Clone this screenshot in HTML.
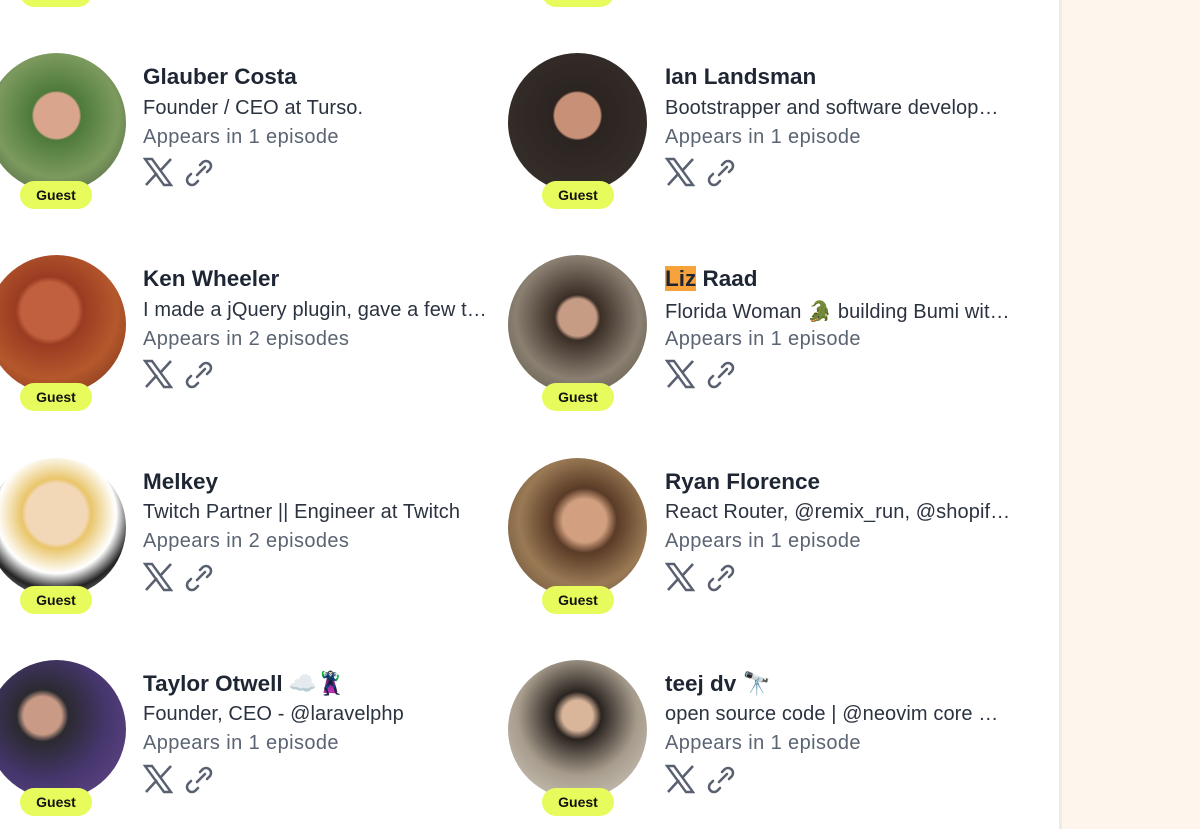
<!DOCTYPE html>
<html><head><meta charset="utf-8"><style>
body{margin:0;width:1200px;height:829px;overflow:hidden;background:#fff;font-family:"Liberation Sans","Noto Sans CJK SC",sans-serif;position:relative}
.panel{position:absolute;left:1059px;top:0;width:141px;height:829px;background:#fef6ec;border-left:3px solid #f1ebe3}
.av{position:absolute;width:139px;height:139px;border-radius:50%}
.badge{position:absolute;width:72px;height:28px;border-radius:14px;background:#e8fb5c;font-size:14px;font-weight:bold;color:#111;text-align:center;line-height:28px}
.t{position:absolute;white-space:nowrap}
.n{font-size:22.5px;font-weight:bold;color:#1e2533}
.d{font-size:20px;color:#2b3340;letter-spacing:0.1px}
.a{font-size:20px;color:#5b6473;letter-spacing:0.4px}
.ic{position:absolute}
.hl{background:#f7a23b}
</style></head><body>
<div class="panel"></div>
<div class="badge" style="left:20px;top:-21px"></div>
<div class="badge" style="left:542px;top:-21px"></div>

<div class="av" style="left:-13px;top:53px;background:radial-gradient(circle at 50% 45%,#d9a58d 0 22%,#4e7a3c 24%,#7c9a5e 60%,#40503a)"></div>
<div class="av" style="left:508px;top:53px;background:radial-gradient(circle at 50% 45%,#c89077 0 22%,#2b2421 24%,#3a322c)"></div>
<div class="av" style="left:-13px;top:255px;background:radial-gradient(circle at 45% 40%,#c0603e 0 25%,#9a3c22 30%,#b5582c 60%,#6d2b17)"></div>
<div class="av" style="left:508px;top:255px;background:radial-gradient(circle at 50% 45%,#c79c85 0 18%,#3a2e26 22%,#8b8072 60%,#4a4838)"></div>
<div class="av" style="left:-13px;top:458px;background:radial-gradient(circle at 50% 40%,#f2d8b6 0 28%,#e9c56a 32%,#fff 55%,#222 70%,#fff)"></div>
<div class="av" style="left:508px;top:458px;background:radial-gradient(circle at 55% 45%,#d2a080 0 20%,#5a3b26 30%,#9a7a55 60%,#5a4630)"></div>
<div class="av" style="left:-13px;top:660px;background:radial-gradient(circle at 40% 40%,#c99b86 0 16%,#2b2a30 22%,#46366e 55%,#6a4a8a)"></div>
<div class="av" style="left:508px;top:660px;background:radial-gradient(circle at 50% 40%,#d9b59a 0 14%,#2a2420 22%,#a79c8c 55%,#d8d3c9)"></div>

<div class="badge" style="left:20px;top:181px">Guest</div>
<div class="badge" style="left:542px;top:181px">Guest</div>
<div class="badge" style="left:20px;top:383px">Guest</div>
<div class="badge" style="left:542px;top:383px">Guest</div>
<div class="badge" style="left:20px;top:586px">Guest</div>
<div class="badge" style="left:542px;top:586px">Guest</div>
<div class="badge" style="left:20px;top:788px">Guest</div>
<div class="badge" style="left:542px;top:788px">Guest</div>

<div class="t n" style="left:143px;top:64px">Glauber Costa</div>
<div class="t d" style="left:143px;top:97px">Founder / CEO at Turso.</div>
<div class="t a" style="left:143px;top:126px">Appears in 1 episode</div>
<div class="t n" style="left:665px;top:64px">Ian Landsman</div>
<div class="t d" style="left:665px;top:97px">Bootstrapper and software develop…</div>
<div class="t a" style="left:665px;top:126px">Appears in 1 episode</div>

<div class="t n" style="left:143px;top:266px">Ken Wheeler</div>
<div class="t d" style="left:143px;top:299px">I made a jQuery plugin, gave a few t…</div>
<div class="t a" style="left:143px;top:328px">Appears in 2 episodes</div>
<div class="t n" style="left:665px;top:266px"><span class="hl">Liz</span> Raad</div>
<div class="t d" style="left:665px;top:299px">Florida Woman 🐊 building Bumi wit…</div>
<div class="t a" style="left:665px;top:328px">Appears in 1 episode</div>

<div class="t n" style="left:143px;top:469px">Melkey</div>
<div class="t d" style="left:143px;top:501px">Twitch Partner || Engineer at Twitch</div>
<div class="t a" style="left:143px;top:530px">Appears in 2 episodes</div>
<div class="t n" style="left:665px;top:469px">Ryan Florence</div>
<div class="t d" style="left:665px;top:501px">React Router, @remix_run, @shopif…</div>
<div class="t a" style="left:665px;top:530px">Appears in 1 episode</div>

<div class="t n" style="left:143px;top:671px">Taylor Otwell ☁️🦹</div>
<div class="t d" style="left:143px;top:703px">Founder, CEO - @laravelphp</div>
<div class="t a" style="left:143px;top:732px">Appears in 1 episode</div>
<div class="t n" style="left:665px;top:671px">teej dv 🔭</div>
<div class="t d" style="left:665px;top:703px">open source code | @neovim core …</div>
<div class="t a" style="left:665px;top:732px">Appears in 1 episode</div>

<svg width="0" height="0" style="position:absolute"><defs>
<g id="x"><path d="M2 2h7l19 26h-7z" fill="none" stroke="#596170" stroke-width="2.4"/><path d="M3 28L14 16M28 2L17 14" stroke="#596170" stroke-width="2.6"/></g>
<g id="l" fill="none" stroke="#596170" stroke-width="2.6" stroke-linecap="round"><path d="M12 16l8-8"/><path d="M15 6l3-3a5 5 0 0 1 7 7l-3 3"/><path d="M13 22l-3 3a5 5 0 0 1-7-7l3-3"/></g>
</defs></svg>
<svg class="ic" style="left:143px;top:157px" width="30" height="30"><use href="#x"/></svg>
<svg class="ic" style="left:185px;top:159px" width="28" height="28"><use href="#l"/></svg>
<svg class="ic" style="left:665px;top:157px" width="30" height="30"><use href="#x"/></svg>
<svg class="ic" style="left:707px;top:159px" width="28" height="28"><use href="#l"/></svg>
<svg class="ic" style="left:143px;top:359px" width="30" height="30"><use href="#x"/></svg>
<svg class="ic" style="left:185px;top:361px" width="28" height="28"><use href="#l"/></svg>
<svg class="ic" style="left:665px;top:359px" width="30" height="30"><use href="#x"/></svg>
<svg class="ic" style="left:707px;top:361px" width="28" height="28"><use href="#l"/></svg>
<svg class="ic" style="left:143px;top:562px" width="30" height="30"><use href="#x"/></svg>
<svg class="ic" style="left:185px;top:564px" width="28" height="28"><use href="#l"/></svg>
<svg class="ic" style="left:665px;top:562px" width="30" height="30"><use href="#x"/></svg>
<svg class="ic" style="left:707px;top:564px" width="28" height="28"><use href="#l"/></svg>
<svg class="ic" style="left:143px;top:764px" width="30" height="30"><use href="#x"/></svg>
<svg class="ic" style="left:185px;top:766px" width="28" height="28"><use href="#l"/></svg>
<svg class="ic" style="left:665px;top:764px" width="30" height="30"><use href="#x"/></svg>
<svg class="ic" style="left:707px;top:766px" width="28" height="28"><use href="#l"/></svg>
</body></html>
